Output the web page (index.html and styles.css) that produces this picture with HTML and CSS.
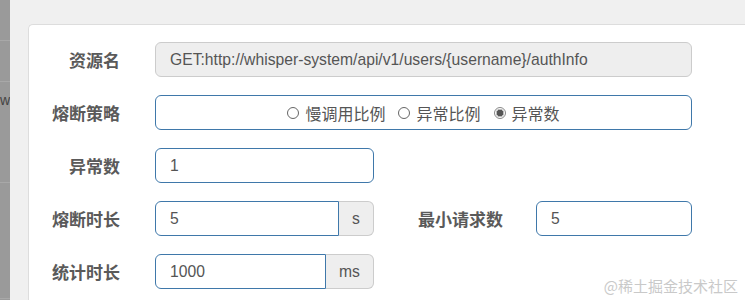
FILE: index.html
```html
<!DOCTYPE html>
<html lang="zh-CN">
<head>
    <meta charset="UTF-8">
    <title>熔断规则</title>
    <link rel="stylesheet" href="styles.css">
</head>
<body>
    <div class="sidebar">
        <div class="side-item"></div>
        <div class="side-item"></div>
        <div class="side-item side-text">w</div>
        <div class="side-item tall"></div>
    </div>
    <div class="main">
        <div class="card">
            <div class="row">
                <label class="lbl">资源名</label>
                <div class="field w-full readonly">GET:http://whisper-system/api/v1/users/{username}/authInfo</div>
            </div>
            <div class="row">
                <label class="lbl">熔断策略</label>
                <div class="field w-full radios">
                    <span class="opt"><span class="radio"></span>慢调用比例</span>
                    <span class="opt"><span class="radio"></span>异常比例</span>
                    <span class="opt"><span class="radio checked"></span>异常数</span>
                </div>
            </div>
            <div class="row">
                <label class="lbl">异常数</label>
                <div class="field w-half">1</div>
            </div>
            <div class="row">
                <label class="lbl">熔断时长</label>
                <div class="group w-half">
                    <div class="field grow">5</div>
                    <span class="addon addon-s">s</span>
                </div>
                <label class="lbl lbl-2">最小请求数</label>
                <div class="field w-small">5</div>
            </div>
            <div class="row">
                <label class="lbl">统计时长</label>
                <div class="group w-half">
                    <div class="field grow">1000</div>
                    <span class="addon addon-ms">ms</span>
                </div>
            </div>
        </div>
    </div>
    <div class="watermark">@稀土掘金技术社区</div>
</body>
</html>
```

FILE: styles.css
```css
* {
    box-sizing: border-box;
}
body {
    margin: 0;
    height: 300px;
    overflow: hidden;
    display: flex;
    background-color: #f0f0f0;
    font-family: "Liberation Sans", "Noto Sans CJK SC", sans-serif;
    color: #555;
}
.sidebar {
    width: 10px;
    flex-shrink: 0;
    background-color: #9a9a9a;
    overflow: hidden;
}
.side-item {
    height: 41px;
    border-bottom: 1px solid #a8a8a8;
}
.side-text {
    height: 101px;
    padding-top: 10px;
    font-size: 14px;
    color: #444;
}
.tall {
    height: 116px;
}
.main {
    flex: 1;
    padding: 24px 0 0 18px;
}
.card {
    background-color: #fff;
    border: 1px solid #ddd;
    border-right: none;
    border-bottom: none;
    border-radius: 5px 0 0 0;
    height: 276px;
    padding-top: 17px;
}
.row {
    display: flex;
    align-items: center;
    height: 35px;
    margin-bottom: 18px;
}
.lbl {
    width: 91px;
    margin-right: 35px;
    text-align: right;
    font-family: "Noto Sans CJK SC", sans-serif;
    font-weight: bold;
    font-size: 17px;
    color: #5a5a5a;
}
.lbl-2 {
    width: 129px;
    margin-right: 33px;
}
.field {
    height: 35px;
    border: 1px solid #3f78aa;
    border-radius: 6px;
    padding-left: 14px;
    display: flex;
    align-items: center;
    font-size: 15.7px;
    color: #555;
    background-color: #fff;
    white-space: nowrap;
}
.readonly {
    background-color: #eee;
    border-color: #ccc;
}
.w-full {
    width: 537px;
}
.w-half {
    width: 219px;
}
.w-small {
    width: 156px;
}
.group {
    display: flex;
    height: 35px;
}
.grow {
    flex: 1;
    border-radius: 6px 0 0 6px;
}
.addon {
    display: flex;
    align-items: center;
    justify-content: center;
    background-color: #eee;
    border: 1px solid #ccc;
    border-left: none;
    border-radius: 0 6px 6px 0;
    font-size: 15.7px;
    color: #555;
}
.addon-s {
    width: 35px;
}
.addon-ms {
    width: 48px;
}
.radios {
    justify-content: center;
    padding-left: 0;
    gap: 13px;
    font-family: "Noto Sans CJK SC", sans-serif;
    font-size: 16px;
}
.opt {
    display: flex;
    align-items: center;
}
.radio {
    width: 12px;
    height: 12px;
    border: 1.3px solid #666;
    border-radius: 50%;
    margin-right: 6px;
    background-color: #fff;
}
.radio.checked {
    border-color: #888;
    background: radial-gradient(circle, #555 0 3px, #bbb 3.5px 4px, #fff 4.5px);
}
.watermark {
    position: absolute;
    right: 7px;
    bottom: 4px;
    font-family: "Noto Sans CJK SC", sans-serif;
    font-size: 15px;
    color: #c9c9c9;
}
```
